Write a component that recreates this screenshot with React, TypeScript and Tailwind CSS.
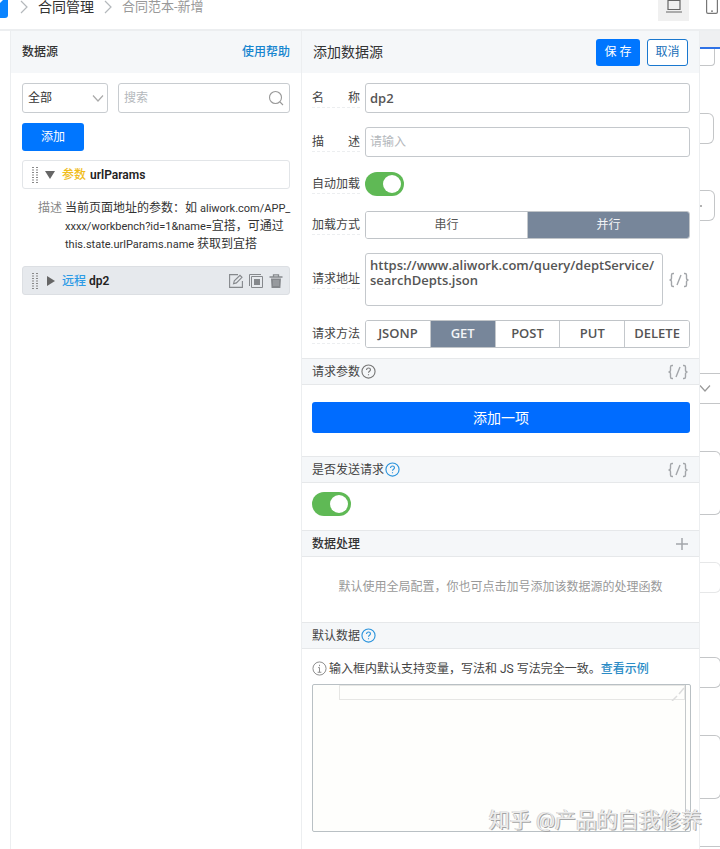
import React, { useState } from 'react';

const CJK = "font-['Roboto','Noto_Sans_CJK_SC',sans-serif]";
const WIDE = "font-['Open_Sans','Noto_Sans_CJK_SC',sans-serif]";

function Chevron({ className }: { className: string }) {
  return (
    <svg viewBox="0 0 12 12" className={className} fill="none" stroke="currentColor" strokeWidth="1.2">
      <path d="M1 3.5 6 9l5-5.5" />
    </svg>
  );
}

function Crumb() {
  return (
    <svg viewBox="0 0 8 14" className="h-3.5 w-2 shrink-0 text-[#b4b8bc]" fill="none" stroke="currentColor" strokeWidth="1.2">
      <path d="M1 1l6 6-6 6" />
    </svg>
  );
}

function Grip() {
  return (
    <svg viewBox="0 0 6 16" className="h-4 w-1.5 shrink-0 text-[#888]" stroke="currentColor" strokeWidth="2" strokeDasharray="1 1.5">
      <path d="M1 0v16M5 0v16" />
    </svg>
  );
}

function Help({ className }: { className: string }) {
  return (
    <svg viewBox="0 0 16 16" className={`size-[15px] shrink-0 ${className}`} fill="none" stroke="currentColor" strokeWidth="1.2">
      <circle cx="8" cy="8" r="7" />
      <path d="M5.9 6.4c0-1.3.9-2.1 2.1-2.1s2.1.8 2.1 1.9c0 1.5-2.1 1.6-2.1 3.2M8 10.8v1.3" />
    </svg>
  );
}

function CodeButton({ label }: { label: string }) {
  return (
    <button aria-label={label} className="h-5 w-[22px] shrink-0 text-[#a3a6aa]">
      <svg viewBox="1 0 22 20" className="h-5 w-[22px]" fill="none" stroke="currentColor" strokeWidth="1.4">
        <path d="M7 3.5H6Q4.500 3.500 4.500 5v3Q4.500 10 2.500 10q2 0 2 2v3q0 1.500 1.500 1.500h1M17 3.500h1q1.500 0 1.500 1.500v3q0 2 2 2-2 0-2 2v3q0 1.500-1.500 1.500h-1M14 5l-4 10" />
      </svg>
    </button>
  );
}

function Switch({ id, label }: { id: string; label?: string }) {
  return (
    <input
      id={id}
      type="checkbox"
      role="switch"
      aria-label={label}
      defaultChecked
      className="flex h-6 w-[39px] shrink-0 appearance-none items-center rounded-full bg-[#b9bdc2] px-[3px] before:size-[18px] before:rounded-full before:bg-white checked:justify-end checked:bg-[#5fb955]"
    />
  );
}

function Label({ text, htmlFor }: { text: string; htmlFor?: string }) {
  const cls = 'flex w-12 shrink-0 justify-between border-b border-dashed border-[#eceef0] text-xs leading-[18px] text-[#444]';
  const chars = text.split('').map((c, i) => <span key={i}>{c}</span>);
  return htmlFor ? (
    <label htmlFor={htmlFor} className={cls}>{chars}</label>
  ) : (
    <span className={cls}>{chars}</span>
  );
}

function Segments({ name, options, initial }: { name: string; options: string[]; initial: string }) {
  const [value, setValue] = useState(initial);
  return (
    <div role="radiogroup" aria-label={name} className="flex h-7 flex-1 divide-x divide-[#c4c8cc] overflow-hidden rounded-[3px] border border-[#c0c4c8]">
      {options.map((o) => (
        <label
          key={o}
          className={`relative flex flex-1 basis-0 items-center justify-center ${WIDE} ${/[A-Z]/.test(o) ? 'text-[13px] font-semibold' : 'text-xs'} ${
            o === value ? 'bg-[#77869a] text-[#f2f4f6]' : 'bg-white text-[#555]'
          }`}
        >
          <input type="radio" name={name} checked={o === value} onChange={() => setValue(o)} className="sr-only" />
          {o}
        </label>
      ))}
    </div>
  );
}

function Bar({ children }: { children: React.ReactNode }) {
  return (
    <div className="flex h-[27px] items-center border-y border-[#e6e8ea] bg-[#f5f7f9] px-2.5 text-xs text-[#444]">
      {children}
    </div>
  );
}

function Row({ children, className }: { children: React.ReactNode; className: string }) {
  return <div className={`flex items-center gap-[5px] pr-[9px] pl-2.5 ${className}`}>{children}</div>;
}

function SourceList() {
  return (
    <section className="flex w-[292px] shrink-0 flex-col border-x border-[#eceef0] bg-white text-xs">
      <header className="flex h-[42px] shrink-0 items-center justify-between bg-[#f5f7f9] px-[11px]">
        <h2 className="font-medium text-[#333]">数据源</h2>
        <a href="#help" className="font-medium text-[#1585cf]">使用帮助</a>
      </header>
      <div className="flex gap-2.5 px-[11px] pt-2.5">
        <div className="relative">
          <select aria-label="类型" className="h-[30px] w-[86px] appearance-none rounded-[3px] border border-[#c8ccd0] bg-white pl-[5px] text-[#333]">
            <option>全部</option>
          </select>
          <Chevron className="pointer-events-none absolute top-[9px] right-1 size-3 text-[#aaa]" />
        </div>
        <div className="relative flex-1">
          <input aria-label="搜索" placeholder="搜索" className="h-[30px] w-full rounded-[3px] border border-[#c8ccd0] pl-[5px] placeholder:text-[#b4b8bc]" />
          <svg viewBox="0 0 16 16" className="absolute top-[7px] right-1.5 size-4 text-[#999]" fill="none" stroke="currentColor" strokeWidth="1.1">
            <circle cx="7.500" cy="7.500" r="6" />
            <path d="M12 12l3 3" />
          </svg>
        </div>
      </div>
      <div className="px-[11px] pt-2.5">
        <button className="block h-7 w-[62px] rounded-[3px] bg-[#0076ff] text-white">添加</button>
      </div>
      <div className="mx-[11px] mt-[9px] flex h-[29px] items-center rounded-[3px] border border-[#e2e5e8] pl-[9px]">
        <Grip />
        <svg viewBox="0 0 10 8" className="mr-[7px] ml-[7px] h-2 w-2.5 fill-[#666]"><path d="M0 0h10L5 8z" /></svg>
        <span className="font-medium text-[#f0bd1c]">参数</span>
        <b className="ml-1 font-semibold text-[#222]">urlParams</b>
      </div>
      <dl className="mt-2.5 flex gap-[3px] pl-[27px] leading-[18px]">
        <dt className="text-[#888]">描述</dt>
        <dd className="whitespace-nowrap text-[#333]">
          当前页面地址的参数：如 <span className="text-[11px] leading-none">aliwork.com/APP_</span>
          <br />
          <span className="text-[11px] leading-none">xxxx/workbench?id=1&amp;name=</span>宜搭，可通过
          <br />
          <span className="text-[11px] leading-none">this.state.urlParams.name</span> 获取到宜搭
        </dd>
      </dl>
      <div className="mx-[11px] mt-[13px] flex h-[29px] items-center rounded-[3px] border border-[#dcdfe3] bg-[#e6e9ed] pr-1.5 pl-[9px]">
        <Grip />
        <svg viewBox="0 0 8 10" className="mr-[7px] ml-[9px] h-2.5 w-2 fill-[#666]"><path d="M0 0v10l8-5z" /></svg>
        <span className="font-medium text-[#2d9be6]">远程</span>
        <b className="ml-[3px] flex-1 font-semibold text-[#222]">dp2</b>
        <div className="flex gap-1.5 text-[#85888c]">
          <button aria-label="编辑">
            <svg viewBox="0 0 14 14" className="size-3.5" fill="none" stroke="currentColor" strokeWidth="1.1">
              <path d="M9 .6H.6v12.800h12.800V7" />
              <path d="M4.500 9.800l.8-3L11 1.300l2 2-5.600 5.600z" />
            </svg>
          </button>
          <button aria-label="复制">
            <svg viewBox="0 0 14 14" className="size-3.5" fill="none" stroke="currentColor">
              <path d="M.5 12V.5H12M2.500 2.500h11v11h-11z" />
              <path d="M5 5h6v6H5z" fill="currentColor" stroke="none" />
            </svg>
          </button>
          <button aria-label="删除">
            <svg viewBox="0 0 14 14" className="size-3.5" fill="none" stroke="currentColor">
              <path d="M.5 3h13M4.500 3V.8h5V3" strokeWidth="1.300" />
              <path d="M2 4.500h10l-.6 9.500H2.600z" fill="currentColor" stroke="none" />
              <path d="M5 6v6M7 6v6M9 6v6" stroke="#c4c7cb" strokeWidth=".6" />
            </svg>
          </button>
        </div>
      </div>
    </section>
  );
}

function SourceForm() {
  const box = 'rounded-[3px] border border-[#c4c8cc] bg-white';
  return (
    <section className="flex min-w-0 flex-1 flex-col border-r border-[#eceef0] bg-white">
      <header className="flex h-[42px] items-center bg-[#f5f7f9] px-[11px]">
        <h2 className="flex-1 text-sm text-[#333]">添加数据源</h2>
        <button className="h-[27px] w-11 rounded-[3px] bg-[#0076ff] text-xs text-white">保 存</button>
        <button className="ml-[7px] h-[27px] w-[41px] rounded-[3px] border border-[#1a78cf] bg-white text-xs text-[#1a6fb8]">取消</button>
      </header>
      <Row className="pt-2.5">
        <Label text="名称" htmlFor="name" />
        <input id="name" defaultValue="dp2" className={`h-[30px] min-w-0 flex-1 px-1 text-[13px] font-semibold text-[#555] ${WIDE} ${box}`} />
      </Row>
      <Row className="pt-3.5">
        <Label text="描述" htmlFor="desc" />
        <input id="desc" placeholder="请输入" className={`h-[30px] min-w-0 flex-1 px-1 text-xs placeholder:text-[#b4b8bc] ${box}`} />
      </Row>
      <Row className="pt-[15px]">
        <Label text="自动加载" htmlFor="auto" />
        <Switch id="auto" />
      </Row>
      <Row className="pt-[15px]">
        <Label text="加载方式" />
        <Segments name="加载方式" options={['串行', '并行']} initial="并行" />
      </Row>
      <Row className="pt-3.5">
        <Label text="请求地址" htmlFor="url" />
        <textarea
          id="url"
          defaultValue="https://www.aliwork.com/query/deptService/searchDepts.json"
          className={`h-[53px] min-w-0 flex-1 resize-none overflow-hidden px-1 pt-1 text-[13px] leading-[15px] font-semibold text-[#555] ${WIDE} ${box}`}
        />
        <CodeButton label="请求地址变量" />
      </Row>
      <Row className="pt-3.5 pb-2.5">
        <Label text="请求方法" />
        <Segments name="请求方法" options={['JSONP', 'GET', 'POST', 'PUT', 'DELETE']} initial="GET" />
      </Row>
      <Bar>
        请求参数
        <Help className="ml-px text-[#777]" />
        <span className="flex-1" />
        <CodeButton label="请求参数变量" />
      </Bar>
      <div className="pt-[17px] pr-[9px] pb-[23px] pl-2.5">
        <button className="block h-[31px] w-full rounded-[3px] bg-[#006cff] text-sm text-white">添加一项</button>
      </div>
      <Bar>
        是否发送请求
        <Help className="ml-px text-[#2a93dc]" />
        <span className="flex-1" />
        <CodeButton label="发送请求变量" />
      </Bar>
      <div className="px-2.5 pt-[9px] pb-3.5">
        <Switch id="send" label="是否发送请求" />
      </div>
      <Bar>
        <h3 className="flex-1 font-medium text-[#333]">数据处理</h3>
        <button aria-label="添加处理函数" className="text-[#a3a6aa]">
          <svg viewBox="0 0 14 14" className="size-3.5" stroke="currentColor" strokeWidth="1.500"><path d="M7 1v12M1 7h12" /></svg>
        </button>
      </Bar>
      <p className="pt-[18px] pb-[22px] text-center text-xs leading-[25px] text-[#999]">默认使用全局配置，你也可点击加号添加该数据源的处理函数</p>
      <Bar>
        默认数据
        <Help className="ml-px text-[#2a93dc]" />
      </Bar>
      <div className="flex h-[35px] items-center px-2.5 pt-1 text-xs whitespace-nowrap text-[#444]">
        <svg viewBox="0 0 16 16" className="mr-0.5 size-[15px] text-[#888]" fill="none" stroke="currentColor">
          <circle cx="8" cy="8" r="7" />
          <path d="M8 4v1.500M6.500 7H8v5M6 12h4" />
        </svg>
        输入框内默认支持变量，写法和 JS 写法完全一致。
        <a href="#sample" className="font-medium text-[#2a8bc6]">查看示例</a>
      </div>
      <div className="mr-2 ml-2.5 flex h-[148px] rounded-[2px] border border-[#b9c0c4] bg-[#fefefc] pl-[26px]">
        <div className="relative flex-1">
          <textarea aria-label="默认数据" className="block h-[15px] w-full resize-none overflow-hidden border border-[#e6e6e4]" />
          <svg viewBox="0 0 14 16" className="absolute top-0 right-0 h-4 w-3.5 text-[#ddd]" stroke="currentColor"><path d="M1 16l5-5M8 9l5-6" strokeWidth="1.500" /></svg>
        </div>
        <span className="w-[5px] border-l border-[#c4c8ca]" />
      </div>
    </section>
  );
}

function Canvas() {
  const field = 'shrink-0 border border-l-0 border-[#c4c6c8]';
  return (
    <aside className="flex w-5 shrink-0 flex-col overflow-hidden bg-white">
      <div className="h-[18px] shrink-0 border-b-2 border-[#2f72e6] bg-[#eff0f2]" />
      <div className={`h-[17px] w-[15px] rounded-br border-t-0 ${field}`} />
      <div className={`mt-[47px] h-[31px] w-3.5 rounded-r-md ${field}`} />
      <div className={`mt-[46px] flex h-[31px] w-[15px] items-center rounded-r-md ${field}`}>
        <span className="size-0.5 rounded-full bg-[#999]" />
      </div>
      <div className={`mt-[152px] h-[31px] w-6 pt-2 ${field}`}>
        <Chevron className="-ml-px size-3 text-[#999]" />
      </div>
      <div className={`mt-[47px] h-16 w-[21px] rounded-r-md ${field}`} />
      <div className="mt-[47px] h-[31px] w-[21px] shrink-0 rounded-r-md border border-l-0 border-[#e6e7e8]" />
      <div className={`mt-16 h-[31px] w-[21px] rounded-r-md ${field}`} />
      <div className={`mt-[47px] h-16 w-[21px] rounded-r-md ${field}`} />
      <div className={`mt-[47px] h-1 w-[21px] border-b-0 ${field}`} />
    </aside>
  );
}

export default function App() {
  return (
    <div className={`relative flex min-h-screen flex-col overflow-hidden bg-white ${CJK}`}>
      <nav className="flex h-[31px] shrink-0 items-start border-b-2 border-[#eceef0]">
        <span className="h-[18px] w-2 rounded-br-[3px] bg-[#0a84ff]">
          <svg viewBox="0 0 8 18" className="h-[18px] w-2 fill-white"><path d="M0 0h3L0 3z" /></svg>
        </span>
        <div className="flex h-3.5 flex-1 items-center pl-3 text-[13px] whitespace-nowrap">
          <Crumb />
          <a href="#list" className="ml-2.5 text-sm leading-3 text-[#333]">合同管理</a>
          <span className="ml-2.5 flex"><Crumb /></span>
          <span className="ml-2.5 leading-3 text-[#999]">合同范本-新增</span>
        </div>
        <button aria-label="电脑" className="flex h-[21px] w-[31px] justify-center bg-[#f0f0f0] text-[#666]">
          <svg viewBox="0 0 16 13" className="h-[13px] w-4" fill="none" stroke="currentColor" strokeWidth="1.200"><path d="M2 0v9.500h12V0M0 12h16M2 .5h12" /></svg>
        </button>
        <button aria-label="手机" className="mr-0.5 ml-[17px] text-[#777]">
          <svg viewBox="0 0 12 14" className="h-3.5 w-3" fill="none" stroke="currentColor" strokeWidth="1.200"><path d="M.6 0v12q0 1.400 1.400 1.400h8q1.400 0 1.400-1.400V0M5 11.200h2" /></svg>
        </button>
      </nav>
      <main className="flex flex-1">
        <div className="w-2.5 shrink-0 bg-white" />
        <SourceList />
        <SourceForm />
        <Canvas />
      </main>
      <p className="pointer-events-none absolute right-[18px] bottom-3.5 text-[21px] leading-8 whitespace-nowrap text-[#ececec] [text-shadow:1px_1px_0_#a4a4a4,-1px_0_0_#cfcfcf]">
        知乎 @产品的自我修养
      </p>
    </div>
  );
}
